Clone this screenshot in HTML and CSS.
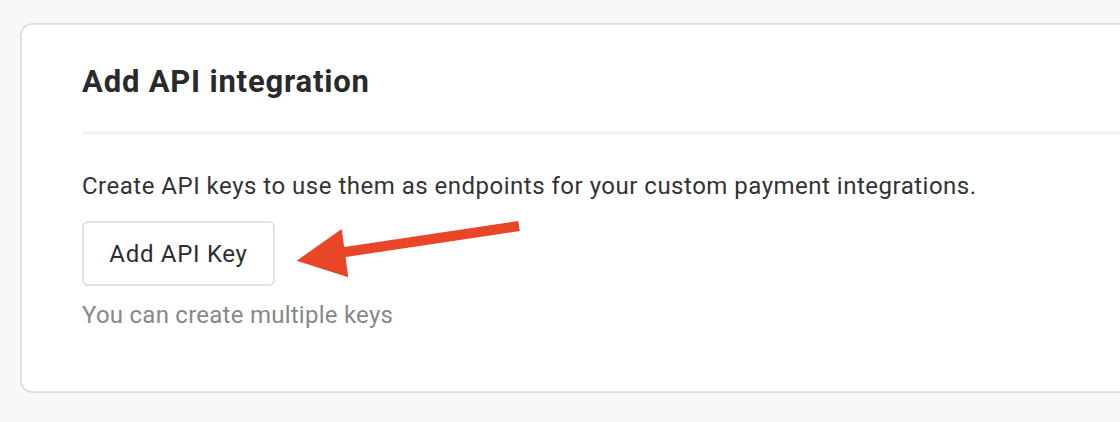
FILE: index.html
```html
<!DOCTYPE html>
<html lang="en">

<head>
    <meta charset="UTF-8">
    <title>API integration</title>

    <link rel="stylesheet" href="styles.css">
</head>

<body>

    <section class="card">
        <header class="card-head">
            <h1 class="card-title">Add API integration</h1>
        </header>

        <p class="intro">Create API keys to use them as endpoints for your custom payment integrations.</p>

        <div class="actions">
            <button class="btn" type="button">Add API Key</button>

            <!-- annotation arrow -->
            <svg class="arrow" width="230" height="60" viewBox="0 0 230 60">
                <line x1="46" y1="31.5" x2="223" y2="5" stroke="#e94627" stroke-width="10"></line>
                <polygon points="0.7,39.7 45.7,8 52.3,56.3" fill="#e94627"></polygon>
            </svg>
        </div>

        <p class="hint">You can create multiple keys</p>
    </section>

</body>

</html>
```

FILE: styles.css
```css
body {
    margin: 0;
    padding: 23px 0 0 20px;
    background-color: #f8f8f8;
    font-family: Roboto, "Liberation Sans", sans-serif;
    overflow: hidden;
    height: 422px;
    box-sizing: border-box;
}

.card {
    background-color: #fff;
    border: 2px solid #e0e0e0;
    border-radius: 12px;
    margin-right: -40px;
    height: 370px;
    box-sizing: border-box;
    padding-left: 60px;
}

.card-head {
    border-bottom: 4px solid #f3f3f3;
    padding-top: 37px;
    padding-bottom: 29px;
}

.card-title {
    margin: 0;
    font-size: 31px;
    font-weight: 700;
    letter-spacing: 0.8px;
    line-height: 40px;
    color: #2a2a2a;
}

.intro {
    margin: 36px 0 0;
    font-size: 24px;
    letter-spacing: 0.5px;
    line-height: 30px;
    color: #333;
}

.actions {
    position: relative;
    margin-top: 20px;
}

.btn {
    font-family: Roboto, "Liberation Sans", sans-serif;
    font-size: 24px;
    letter-spacing: 0.7px;
    color: #2d2d2d;
    background-color: #fff;
    border: 2px solid #e2e2e2;
    border-radius: 6px;
    width: 193px;
    height: 65px;
    padding: 0;
}

.arrow {
    position: absolute;
    left: 214px;
    top: 0;
}

.hint {
    margin: 14px 0 0;
    font-size: 24px;
    letter-spacing: 0.25px;
    line-height: 30px;
    color: #888;
}
```
